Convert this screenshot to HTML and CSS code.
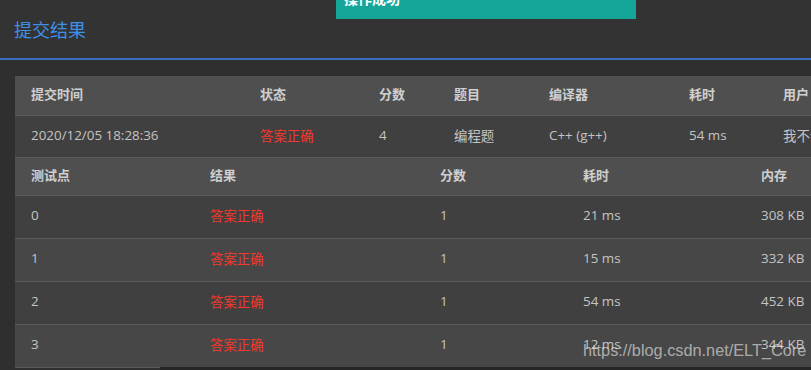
FILE: index.html
```html
<!DOCTYPE html>
<html>
  <head>
    <meta charset="utf-8">
    <title>提交结果</title>
    <link rel="stylesheet" href="styles.css">
  </head>
  <body>
    <div class="toast">操作成功</div>

    <div class="header">
      <h1 class="title">提交结果</h1>
    </div>

    <div class="main">
      <div class="panel">
        <table class="result">
          <colgroup>
            <col style="width: 229px">
            <col style="width: 119px">
            <col style="width: 75px">
            <col style="width: 95px">
            <col style="width: 140px">
            <col style="width: 94px">
            <col>
          </colgroup>
          <thead>
            <tr class="head">
              <th>提交时间</th>
              <th>状态</th>
              <th>分数</th>
              <th>题目</th>
              <th>编译器</th>
              <th>耗时</th>
              <th>用户</th>
            </tr>
          </thead>
          <tbody>
            <tr class="summary">
              <td>2020/12/05 18:28:36</td>
              <td class="ok">答案正确</td>
              <td>4</td>
              <td>编程题</td>
              <td>C++ (g++)</td>
              <td>54 ms</td>
              <td>我不会写代码</td>
            </tr>
          </tbody>
        </table>

        <table class="result cases">
          <colgroup>
            <col style="width: 179px">
            <col style="width: 230px">
            <col style="width: 143px">
            <col style="width: 178px">
            <col>
          </colgroup>
          <thead>
            <tr class="head sub">
              <th>测试点</th>
              <th>结果</th>
              <th>分数</th>
              <th>耗时</th>
              <th>内存</th>
            </tr>
          </thead>
          <tbody>
            <tr>
              <td>0</td>
              <td class="ok">答案正确</td>
              <td>1</td>
              <td>21 ms</td>
              <td>308 KB</td>
            </tr>
            <tr>
              <td>1</td>
              <td class="ok">答案正确</td>
              <td>1</td>
              <td>15 ms</td>
              <td>332 KB</td>
            </tr>
            <tr>
              <td>2</td>
              <td class="ok">答案正确</td>
              <td>1</td>
              <td>54 ms</td>
              <td>452 KB</td>
            </tr>
            <tr>
              <td>3</td>
              <td class="ok">答案正确</td>
              <td>1</td>
              <td>12 ms</td>
              <td>344 KB</td>
            </tr>
          </tbody>
        </table>
      </div>
      <div class="scrollbar"></div>
    </div>

    <div class="watermark">https://blog.csdn.net/ELT_Core</div>
  </body>
</html>
```

FILE: styles.css
```css
body {
  margin: 0;
  width: 811px;
  height: 370px;
  overflow: hidden;
  background: #333333;
  font-family: "Open Sans", "Noto Sans CJK SC", sans-serif;
  position: relative;
}
.toast {
  position: absolute;
  top: 0;
  left: 336px;
  width: 300px;
  height: 19px;
  padding-left: 8px;
  box-sizing: border-box;
  background: #16a699;
  color: #ffffff;
  font-weight: bold;
  font-size: 14px;
  line-height: 14px;
  overflow: hidden;
}
.toast::before {
  content: "";
  display: block;
  margin-top: -8px;
}
.header {
  height: 60px;
  padding-left: 14px;
  border-bottom: 2px solid #3b6cc4;
  box-sizing: border-box;
}
.title {
  margin: 0;
  padding-top: 17px;
  font-size: 18px;
  line-height: 24px;
  font-weight: normal;
  color: #3d8fe8;
  font-family: "Noto Sans CJK SC", sans-serif;
}
.main {
  background: #2f2f2f;
  padding: 16px 0 0 15px;
  height: 310px;
  box-sizing: border-box;
  position: relative;
  overflow: hidden;
}
.panel {
  width: 900px;
}
.result {
  width: 100%;
  border-collapse: collapse;
  table-layout: fixed;
  font-size: 13.4px;
  color: #c4c4c4;
}
.result th,
.result td {
  padding: 0 0 0 16px;
  text-align: left;
  white-space: nowrap;
  overflow: hidden;
  border-bottom: 1px solid #5a5a5a;
}
.result th {
  font-size: 13px;
  font-weight: bold;
  color: #cfcfcf;
  font-family: "Noto Sans CJK SC", sans-serif;
  padding-bottom: 3px;
}
.head {
  background: #4f4f4f;
  height: 39px;
}
.head.sub {
  height: 38px;
}
.summary {
  background: #404040;
  height: 42px;
}
.summary td {
  padding-bottom: 2px;
}
.cases tbody tr {
  height: 43px;
  background: #404040;
}
.cases tbody td {
  padding-bottom: 4px;
}
.cases tbody tr:nth-child(even) {
  background: #474747;
}
.ok {
  color: #f2392c;
}
.scrollbar {
  position: absolute;
  left: 160px;
  right: 0;
  top: 307px;
  height: 3px;
  background: #262626;
}
.watermark {
  position: absolute;
  left: 583px;
  top: 341px;
  font-family: "Liberation Sans", sans-serif;
  font-size: 16.3px;
  color: rgba(235, 235, 235, 0.62);
}
```
